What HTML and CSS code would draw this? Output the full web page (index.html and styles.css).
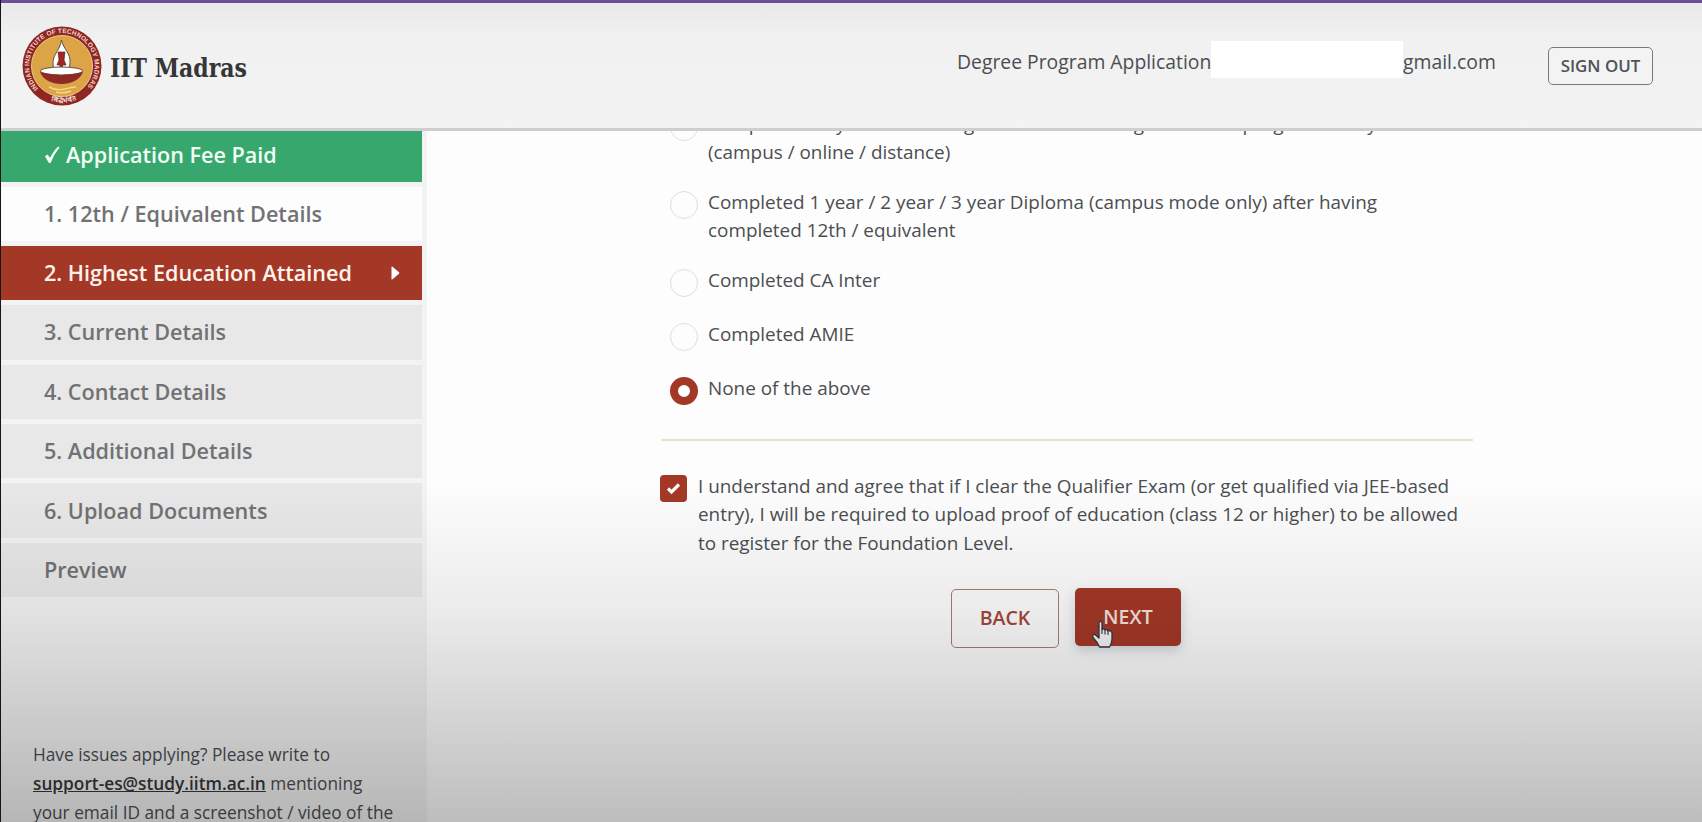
FILE: index.html
```html
<!DOCTYPE html>
<html lang="en">
<head>
<meta charset="utf-8">
<title>IIT Madras Application</title>
<link rel="stylesheet" href="styles.css">
</head>
<body>
<div class="page">
  <header class="header">
    <div class="brand">
      <svg class="seal" viewBox="0 0 80 80">
        <defs>
          <path id="ring-top" d="M16.300 62.500A32.800 32.800 0 1 1 63.700 62.500"/>
          <path id="ring-bottom" d="M17 68.500A36.500 36.500 0 0 0 63 68.500"/>
        </defs>
        <circle cx="40" cy="40" r="39.500" fill="#8f2622"/>
        <circle cx="40" cy="40" r="30.500" fill="#dca447" stroke="#e8c78c" stroke-width="1"/>
        <text class="seal-text"><textPath href="#ring-top" textLength="150">INDIAN INSTITUTE OF TECHNOLOGY MADRAS</textPath></text>
        <text class="seal-text"><textPath href="#ring-bottom" startOffset="13" textLength="27">सिद्धिर्भवति</textPath></text>
        <path d="M39.500 14C41 23 49 27 48 37C47.500 43 45 46 43 47H35C32 44 30 39 31.500 33C33 27 38 23 39.500 14Z" fill="#fff" stroke="#625043" stroke-width="1"/>
        <path d="M36 26H43L42 34L44 39H40.500V43H38V39H35L37 34Z" fill="#a22622" stroke="#5b2922" stroke-width=".7"/>
        <ellipse cx="39.500" cy="45" rx="21" ry="4" fill="#fff" stroke="#625043" stroke-width="1"/>
        <path d="M18 46Q39 52 61 46C58 54 49 58 39.500 58S21 54 18 46Z" fill="#8e2925"/>
        <path d="M36 42L34 48H45L42 42Z" fill="#fff"/>
        <path d="M27 61Q35 65 43 63T54 61M34 66Q41 68 49 65" fill="none" stroke="#f5d988" stroke-width="1.500"/>
      </svg>
      <svg class="wordmark" width="142" height="36" viewBox="0 0 142 36"><text x="0" y="27" textLength="137" lengthAdjust="spacingAndGlyphs">IIT Madras</text></svg>
    </div>
    <div class="account">
      <span class="program">Degree Program Application</span><span class="redacted"></span><span class="mail">gmail.com</span>
      <button class="signout">SIGN OUT</button>
    </div>
  </header>

  <div class="body">
    <aside class="sidebar">
      <nav class="steps">
        <div class="step paid"><svg class="tick" width="17" height="19" viewBox="0 0 17 19"><path d="M1 11.500L3.500 9.500L6 13Q10 5 14.500 1.500L15.500 2.500Q10 9 6.500 18H5Z" fill="#fff"/></svg>Application Fee Paid</div>
        <div class="step done">1. 12th / Equivalent Details</div>
        <div class="step active">2. Highest Education Attained<svg class="caret" width="9" height="14" viewBox="0 0 9 14"><path d="M.5 1Q.5 0 1.500 .8L8 6.200Q8.800 7 8 7.800L1.500 13.200Q.5 14 .5 13Z" fill="#fff"/></svg></div>
        <div class="step">3. Current Details</div>
        <div class="step">4. Contact Details</div>
        <div class="step">5. Additional Details</div>
        <div class="step">6. Upload Documents</div>
        <div class="step">Preview</div>
      </nav>
      <p class="help">Have issues applying? Please write to<br><a>support-es@study.iitm.ac.in</a> mentioning<br>your email ID and a screenshot / video of the</p>
    </aside>

    <main class="main">
      <div class="options">
        <div class="option"><span class="radio"></span><span class="label">Completed 1+ years of undergraduate from a degree / other program in any mode<br>(campus / online / distance)</span></div>
        <div class="option"><span class="radio"></span><span class="label">Completed 1 year / 2 year / 3 year Diploma (campus mode only) after having<br>completed 12th / equivalent</span></div>
        <div class="option"><span class="radio"></span><span class="label">Completed CA Inter</span></div>
        <div class="option"><span class="radio"></span><span class="label">Completed AMIE</span></div>
        <div class="option"><span class="radio on"></span><span class="label">None of the above</span></div>
      </div>
      <div class="agree">
        <span class="checkbox"><svg width="15" height="13" viewBox="0 0 15 13"><path d="M2 6.500L5.500 10L13 2.500" fill="none" stroke="#fff" stroke-width="3.200"/></svg></span>
        <span class="label">I understand and agree that if I clear the Qualifier Exam (or get qualified via JEE-based<br>entry), I will be required to upload proof of education (class 12 or higher) to be allowed<br>to register for the Foundation Level.</span>
      </div>
      <div class="actions">
        <button class="btn back">BACK</button>
        <button class="btn next">NEXT
          <svg class="pointer" width="23" height="29" viewBox="0 0 23 29"><path d="M8 2.500Q9.500 0 11 2.500V9.500Q13 7.800 14 10Q16 8.800 17 11Q20.500 10 21 13V19Q21 23 18.500 27H8.500Q6.500 22 2 17.500Q1 14 4 14.500L8 18Z" fill="#f3f3f3" stroke="#303540" stroke-width="1.300" stroke-linejoin="round"/><path d="M11 9.500V14M14 10V14.500M17 11V15" stroke="#303540" stroke-width="1.100"/></svg>
        </button>
      </div>
    </main>
  </div>
  <div class="shade"></div>
</div>
</body>
</html>
```

FILE: styles.css
```css
* { box-sizing: border-box; }
body { margin: 0; }
.page {
  position: relative;
  width: 1702px;
  height: 822px;
  overflow: hidden;
  display: flex;
  flex-direction: column;
  border-left: 1px solid #161616;
  background: #fdfdfd;
  font-family: "Open Sans", "Noto Sans", sans-serif;
  color: #4b4e51;
}
.header {
  position: relative;
  z-index: 2;
  flex: none;
  height: 131px;
  display: flex;
  justify-content: space-between;
  align-items: flex-start;
  border-top: 3px solid #6d4f95;
  border-bottom: 3px solid #cecece;
  background: linear-gradient(#e9e9ea, #f1f1f1 35px, #f3f3f3);
}
.brand { display: flex; padding: 23px 0 0 21px; }
.seal { width: 80px; height: 80px; }
.seal-text { font: bold 6.5px "Liberation Sans", sans-serif; fill: #f0d9d0; }
.wordmark { margin: 24px 0 0 8px; overflow: visible; }
.wordmark text { font: bold 26px "DejaVu Serif", serif; fill: #353638; }
.account { display: flex; align-items: flex-start; padding: 38px 49px 0 0; font-size: 19.350px; }
.program { width: 254px; line-height: 42px; white-space: nowrap; }
.redacted { width: 192px; height: 37px; background: #fff; }
.mail { width: 92px; line-height: 42px; margin-right: 53px; }
.signout {
  width: 105px;
  height: 38px;
  margin-top: 6px;
  padding: 0 0 2px;
  border: 1.500px solid #77797b;
  border-radius: 5px;
  background: #f3f3f3;
  color: #505256;
  font: 600 16.900px "Open Sans", sans-serif;
}
.body { flex: 1; min-height: 0; display: flex; }
.sidebar {
  width: 426px;
  flex: none;
  display: flex;
  flex-direction: column;
  background: #f3f3f3;
}
.steps { width: 421px; display: flex; flex-direction: column; gap: 5px; }
.step {
  height: 54.400px;
  display: flex;
  align-items: center;
  padding: 0 22px 1px 43px;
  background: #e8e8e8;
  color: #717273;
  font-size: 21.600px;
  font-weight: 600;
  white-space: nowrap;
}
.step.paid { height: 50.500px; padding-bottom: 4px; background: #38a76e; color: #f1fff6; }
.step.done { background: #fdfdfd; }
.step.active { justify-content: space-between; background: #a43827; color: #fff2ec; }
.tick { margin-right: 5px; }
.help { margin: 143px 0 0 32px; font-size: 17.280px; line-height: 29px; white-space: nowrap; }
.help a { color: #34373a; font-weight: 600; text-decoration: underline; }
.main { padding-left: 234px; width: 1046px; font-size: 18.900px; line-height: 28px; white-space: nowrap; }
.options {
  display: flex;
  flex-direction: column;
  gap: 22px;
  margin-top: -20px;
  height: 330px;
  border-bottom: 2px solid #e5e4cf;
  padding-left: 9px;
}
.option { display: flex; gap: 10px; min-height: 32px; }
.option .label { margin: -1px 0 1px; }
.option .label, .radio { flex: none; }
.radio {
  width: 28px;
  height: 28px;
  margin-top: 2px;
  border: 1.500px solid #dedede;
  border-radius: 50%;
}
.radio.on { border: 8.500px solid #a43827; background: #fff; }
.agree { display: flex; gap: 11px; margin: 31px 0 0 -1px; line-height: 28.400px; }
.checkbox {
  width: 27px;
  height: 27px;
  margin-top: 3px;
  flex: none;
  display: flex;
  align-items: center;
  justify-content: center;
  border-radius: 4px;
  background: #a43827;
}
.actions { display: flex; align-items: flex-start; gap: 16px; padding: 31px 0 0 290px; }
.btn {
  position: relative;
  border-radius: 5px;
  font: 600 19.500px "Open Sans", sans-serif;
}
.back { width: 108px; height: 59px; margin-top: 1px; padding: 0 0 3px; border: 1.500px solid #b07a71; background: transparent; color: #a3473c; }
.next { width: 106px; height: 58px; padding: 0 0 2px; border: 0; background: #a43827; color: #f5e3df; box-shadow: 0 5px 12px rgba(80, 110, 120, .25); }
.pointer { position: absolute; left: 16px; top: 32px; }
.shade {
  position: absolute;
  inset: 480px 0 0;
  z-index: 3;
  pointer-events: none;
  background: linear-gradient(rgba(0, 0, 0, 0), rgba(0, 0, 0, .07) 38%, rgba(0, 0, 0, .25));
}
```
